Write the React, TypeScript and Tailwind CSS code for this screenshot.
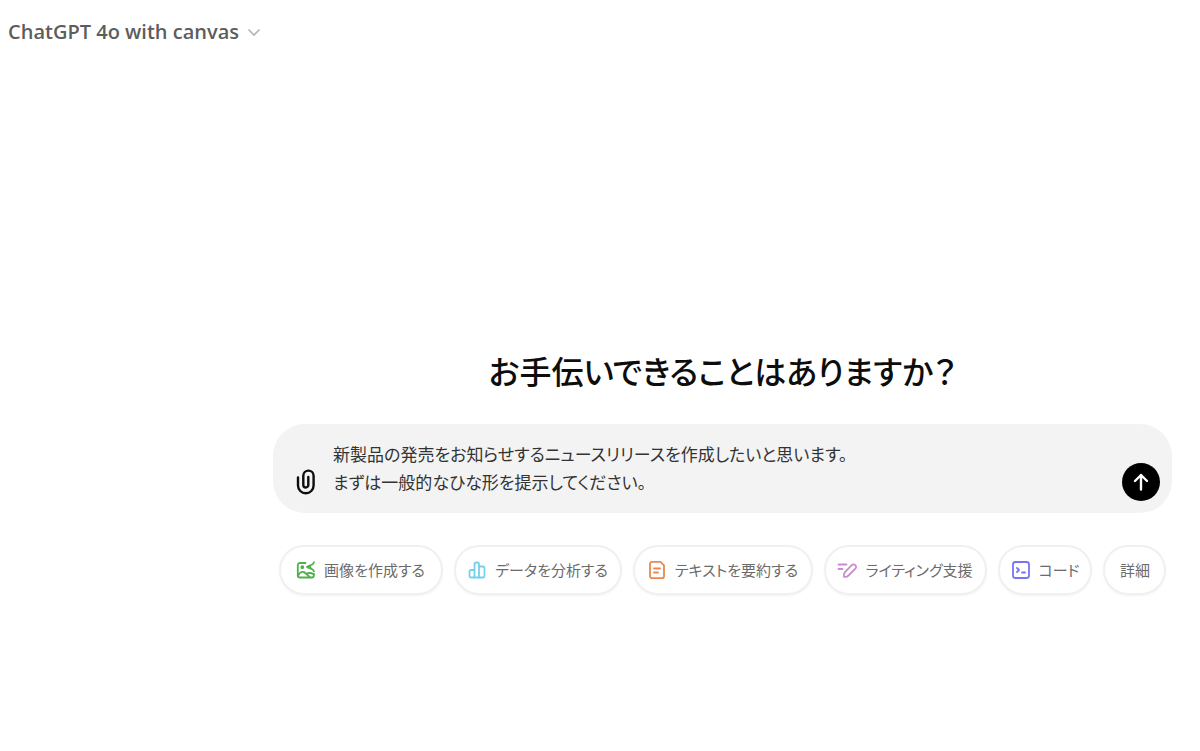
import { useState, type ReactNode } from 'react';

const icon = {
  width: 20,
  height: 20,
  viewBox: '0 0 20 20',
  fill: 'none',
  stroke: 'currentColor',
  strokeWidth: 1.8,
  strokeLinecap: 'round',
  strokeLinejoin: 'round',
  'aria-hidden': true,
} as const;

const suggestions: { label: string; width: string; color: string; icon: ReactNode }[] = [
  {
    label: '画像を作成する',
    width: 'min-w-[164px]',
    color: 'text-[#4fb04c]',
    icon: (
      <svg {...icon}>
        <path d="M9.500 3H3.800A2 2 0 0 0 1.800 5v10.500a2 2 0 0 0 2 2h12a2 2 0 0 0 2-2V14" />
        <path d="M2 15.500c1.500-2.500 3.500-4 5.500-3.500 2.500.5 3.500 3.500 6.500 5.300M10.500 13.500c2.500-.8 5-.6 7.300.8" />
        <circle cx="6.300" cy="7.200" r="1" />
        <path d="M18 2.200c-.6 1.600-1.500 2.400-3 2.800-1.400.5-2.800 1-4 2 1.200.8 2.600 1.200 4 1.700 1.500.5 2.400 1.200 3 2.600M12 7h2.500" />
      </svg>
    ),
  },
  {
    label: 'データを分析する',
    width: 'min-w-[168px]',
    color: 'text-[#76d0eb]',
    icon: (
      <svg {...icon}>
        <path d="M7.500 17.500V4a1.500 1.500 0 0 1 1.500-1.500h1.500A1.500 1.500 0 0 1 12 4v13.500" />
        <path d="M7.500 10H4a1.500 1.500 0 0 0-1.500 1.500V16A1.500 1.500 0 0 0 4 17.500h12a1.500 1.500 0 0 0 1.500-1.500V8A1.500 1.500 0 0 0 16 6.500h-4" />
      </svg>
    ),
  },
  {
    label: 'テキストを要約する',
    width: 'min-w-[180px]',
    color: 'text-[#e8894f]',
    icon: (
      <svg {...icon}>
        <path d="M5 1.800h8.500L17 5.300v10.900a2 2 0 0 1-2 2H5a2 2 0 0 1-2-2V3.800a2 2 0 0 1 2-2Z" />
        <path d="M7 8.500h6M7 12.500h4" />
      </svg>
    ),
  },
  {
    label: 'ライティング支援',
    width: 'min-w-[163px]',
    color: 'text-[#cb8bd0]',
    icon: (
      <svg {...icon}>
        <path d="M1.500 4.500h8M1.500 9h4" />
        <path d="M7 16.800c-.5-1.800-.2-3.400 1-4.700l6.700-7a2.500 2.500 0 0 1 3.600 0 2.500 2.500 0 0 1 0 3.600l-6.800 6.800c-1.200 1.200-2.700 1.700-4.500 1.300Z" />
      </svg>
    ),
  },
  {
    label: 'コード',
    width: 'min-w-[94px]',
    color: 'text-[#7775f5]',
    icon: (
      <svg {...icon}>
        <rect x="2" y="2" width="16" height="16" rx="2.500" />
        <path d="M6 8l2 2-2 2M11 12.500h3" />
      </svg>
    ),
  },
  { label: '詳細', width: 'min-w-[63px]', color: '', icon: null },
];

export default function App() {
  const [prompt, setPrompt] = useState(
    '新製品の発売をお知らせするニュースリリースを作成したいと思います。\nまずは一般的なひな形を提示してください。',
  );

  return (
    <div className="min-h-screen bg-white font-['Noto_Sans_CJK_JP',sans-serif] [font-feature-settings:'palt']">
      {/* Model picker */}
      <header className="flex h-16 items-center px-2">
        <button className="flex items-center gap-2 font-['Open_Sans','Noto_Sans_CJK_JP',sans-serif] text-xl font-semibold text-[#5d5d5d]">
          ChatGPT 4o with canvas
          <svg width="14" height="14" viewBox="0 0 14 14" fill="none" stroke="#b4b4b4" strokeWidth="1.6" aria-hidden="true">
            <path d="M1.500 4.500L7 10l5.500-5.500" />
          </svg>
        </button>
      </header>

      <main className="pt-[280px] pr-7 pl-[273px]">
        <h1 className="text-center text-[32px] leading-[52px] font-medium text-[#0d0d0d]">
          お手伝いできることはありますか？
        </h1>

        {/* Composer */}
        <form
          onSubmit={(e) => e.preventDefault()}
          className="mt-7 flex items-end rounded-[32px] bg-[#f3f3f3] pr-3 pl-5"
        >
          <button type="button" aria-label="ファイルを添付" className="mb-[17px] flex h-7 w-6 items-center justify-center text-[#0d0d0d]">
            <svg width="24" height="28" viewBox="0 0 24 28" fill="none" stroke="currentColor" strokeWidth="2.4" strokeLinecap="round" aria-hidden="true">
              <path d="M5 9.500v8a7.800 7.800 0 0 0 15.600 0V7.800a5 5 0 0 0-10.300 0v9.200a2.500 2.500 0 0 0 5 0V9" />
            </svg>
          </button>
          <textarea
            aria-label="メッセージ"
            rows={2}
            value={prompt}
            onChange={(e) => setPrompt(e.target.value)}
            className="mt-4 mb-[17px] ml-4 min-w-0 flex-1 resize-none bg-transparent text-[17px] leading-7 text-[#333333] outline-none"
          />
          <button aria-label="送信" className="mb-3 flex size-[38px] items-center justify-center rounded-full bg-black text-white">
            <svg width="20" height="20" viewBox="0 0 20 20" fill="none" stroke="currentColor" strokeWidth="2.4" strokeLinecap="round" strokeLinejoin="round" aria-hidden="true">
              <path d="M10 17.500V3M4 9l6-6 6 6" />
            </svg>
          </button>
        </form>

        {/* Suggestions */}
        <div className="mt-8 flex justify-center gap-[11px]">
          {suggestions.map((item) => (
            <button
              key={item.label}
              className={`flex h-[50px] items-center justify-center gap-2 rounded-full border-2 border-[#f0f0f0] px-[11px] text-[15px] whitespace-nowrap text-[#6b6b6b] shadow-xs ${item.width}`}
            >
              {item.icon && <span className={item.color}>{item.icon}</span>}
              {item.label}
            </button>
          ))}
        </div>
      </main>
    </div>
  );
}
